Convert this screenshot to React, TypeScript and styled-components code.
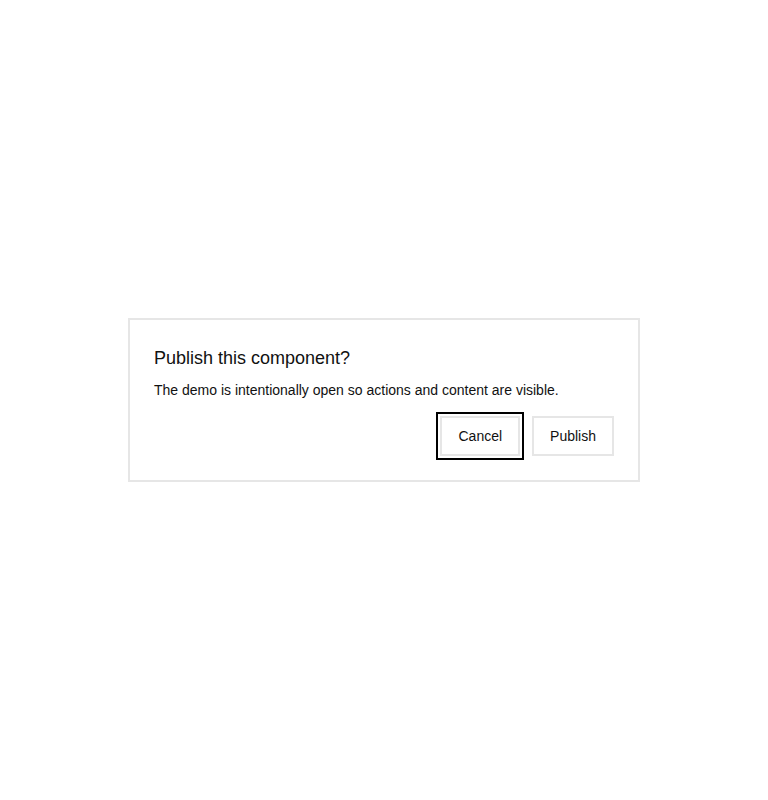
import styled, { createGlobalStyle } from 'styled-components';

const GlobalStyle = createGlobalStyle`
  html, body {
    margin: 0;
    padding: 0;
    background: #ffffff;
  }
  body {
    font-family: "Liberation Sans", Arial, sans-serif;
    color: #111111;
  }
`;

const Page = styled.div`
  min-height: 800px;
  display: flex;
  align-items: center;
  justify-content: center;
`;

const Dialog = styled.div`
  width: 512px;
  box-sizing: border-box;
  border: 2px solid #e6e6e6;
  background: #ffffff;
  padding: 24px;
`;

const Title = styled.h2`
  margin: 0 0 7px;
  font-size: 18px;
  font-weight: 400;
  line-height: 29px;
  color: #111111;
`;

const Description = styled.p`
  margin: 0 0 15px;
  font-size: 14px;
  line-height: 21px;
  color: #111111;
`;

const Actions = styled.div`
  display: flex;
  justify-content: flex-end;
  gap: 12px;
`;

const Button = styled.button<{ $focused?: boolean }>`
  font-family: "Liberation Sans", Arial, sans-serif;
  font-size: 14px;
  line-height: 16px;
  height: 40px;
  padding: 0 16px;
  background: #ffffff;
  color: #111111;
  border: 2px solid #e6e6e6;
  border-radius: 0;
  cursor: pointer;
  outline: ${p => (p.$focused ? '2px solid #000000' : 'none')};
  outline-offset: 2px;
`;

const App = () => {
  return (
    <>
      <GlobalStyle />
      <Page>
        <Dialog role="dialog" aria-labelledby="publish-title">
          <Title id="publish-title">Publish this component?</Title>
          <Description>
            The demo is intentionally open so actions and content are visible.
          </Description>
          <Actions>
            <Button $focused>Cancel</Button>
            <Button>Publish</Button>
          </Actions>
        </Dialog>
      </Page>
    </>
  );
};

export default App;
